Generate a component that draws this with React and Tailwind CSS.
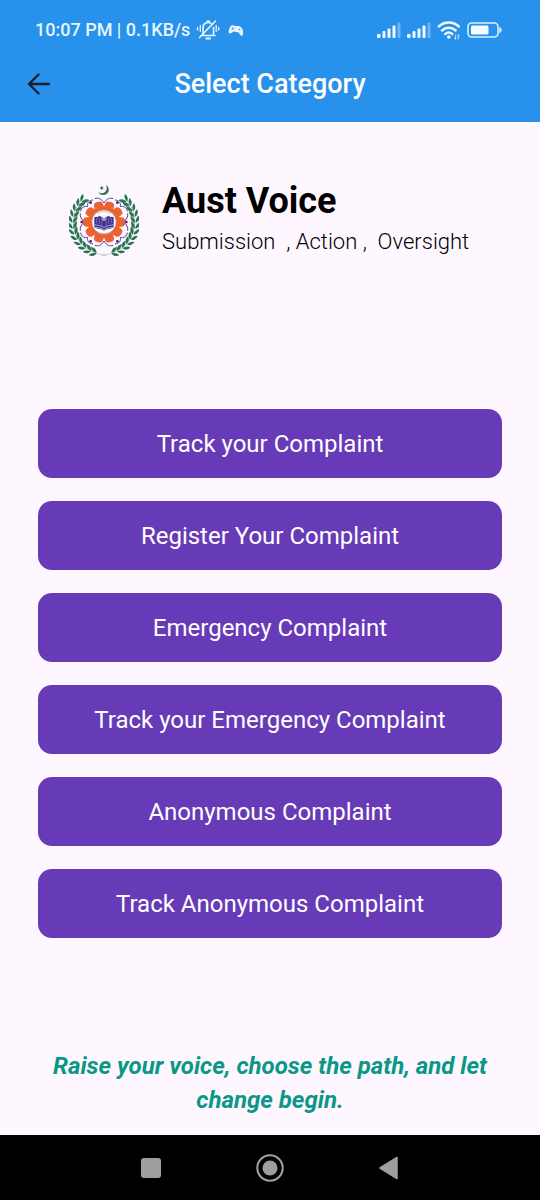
import React from "react";

const categories = [
  "Track your Complaint",
  "Register Your Complaint",
  "Emergency Complaint",
  "Track your Emergency Complaint",
  "Anonymous Complaint",
  "Track Anonymous Complaint",
];

function MutedBell() {
  return (
    <svg width="24" height="22" viewBox="0 0 24 22" fill="none" stroke="#e6f6ff" strokeWidth="1.6" strokeLinecap="round" aria-hidden="true">
      <path d="M5.500 16.500h13.500M7 16V9a5 5 0 0 1 8.500-4M17.500 8.500V16M11 2.200h2.500" />
      <path d="M3.500 18.500 19.500 2" />
      <path d="M10.500 19.500h3.500" strokeWidth="2.200" />
      <path d="M4.300 6.500v6M1.500 8.500v2.500M20.200 6.500v6M22.800 8.500v2.500" strokeWidth="1.300" />
    </svg>
  );
}

function Gamepad() {
  return (
    <svg width="16" height="13" viewBox="0 0 16 13" aria-hidden="true">
      <path fill="#e6f6ff" d="M3.500 1.500C5 .9 6.200 2 7.500 2.100c1.400.1 3-.3 4.500.3 2.700 1 3.500 5 3 8-.2 1.700-2.200 1.700-3 .3L10.800 8.500 5.500 7.600 3 9.200C1.700 10 .4 9.200.6 7.600c.3-2.500 1-5.300 2.900-6.100Z" />
      <path d="M3.300 4.700h3M4.800 3.200v3" stroke="#2891eb" strokeWidth=".7" />
      <circle cx="11.500" cy="5.500" r=".8" fill="#2891eb" />
    </svg>
  );
}

function Signal() {
  return (
    <svg width="24" height="17" viewBox="0 0 24 17" fill="#f0faff" aria-hidden="true">
      <rect x="0" y="12" width="3.500" height="4" rx="1.200" />
      <rect x="5.500" y="9" width="3" height="7" rx="1" />
      <rect x="10.500" y="6.500" width="3" height="9.500" rx="1" />
      <rect x="15.500" y="3.500" width="3" height="12.500" rx="1" />
      <rect x="20.500" y="0.500" width="3" height="15.500" rx="1" opacity=".35" />
    </svg>
  );
}

function Wifi() {
  return (
    <svg width="24" height="19" viewBox="0 0 24 19" fill="none" stroke="#f0faff" strokeWidth="2.500" strokeLinecap="round" aria-hidden="true">
      <path d="M1.800 5.500a14.500 14.500 0 0 1 20 0M5 9.500a10 10 0 0 1 13.600 0M8.300 13a5.500 5.500 0 0 1 7 0" />
      <circle cx="11.800" cy="16" r="1.800" fill="#f0faff" stroke="none" />
      <path d="M18.700 14v4M17.400 16.800l1.300 1.200M21.200 18v-4.500l1.200 1.200" strokeWidth="1" opacity=".8" />
    </svg>
  );
}

function Battery() {
  return (
    <svg width="36" height="16" viewBox="0 0 36 16" aria-hidden="true">
      <rect x="1" y="1" width="30" height="14" rx="3.800" fill="none" stroke="#d9f1ff" strokeWidth="1.600" />
      <rect x="4" y="3.500" width="17.500" height="9" rx="1.500" fill="#f5fbff" />
      <path d="M32.800 5.500c1.800.2 1.800 4.800 0 5Z" fill="#d9f1ff" stroke="#d9f1ff" />
    </svg>
  );
}

const leafAngles = [14, 25, 36, 47, 58, 69, 80, 91, 102, 113, 124, 134];

function LaurelBranch() {
  return (
    <g fill="#2b7553">
      <path d="M138 234C77 229 42 187 40 136c0-29 10-52 25-68" fill="none" stroke="#7aa58f" strokeWidth="1.500" />
      {leafAngles.map((angle) => (
        <g key={angle} transform={`rotate(${angle} 131 137)`}>
          <path d="M132 229c-10 1-17-4-21-13 12-1 19 4 21 13Z" />
          <path d="M132 231c-8-1-18 3-21 11 10 2 18-2 21-11Z" />
        </g>
      ))}
    </g>
  );
}

const lobes = [18, 54, 90, 126, 162, 198, 234, 270, 306, 342];

function Emblem() {
  return (
    <svg className="h-[75px] w-[70px] shrink-0" viewBox="27 20 210 225" role="img" aria-label="University emblem">
      <LaurelBranch />
      <g transform="translate(264 0) scale(-1 1)">
        <LaurelBranch />
      </g>
      <path d="M138 22c16 12 7 32-9 31-7 0-12-4-15-10 6 6 15 6 21 1s7-14 3-22Z" fill="#356f52" />
      <path d="m124 24 2 5 5-1-3 4 3 4-5-1-3 4v-5l-5-2 5-2Z" fill="#356f52" />
      <g fill="none" stroke="#4b3da0" strokeWidth="3">
        <path d="M105 64c9-4 19 0 27 13 8-13 18-17 27-13M99 68c-13 1-18 10-16 20-10-3-19 2-21 14M165 68c13 1 18 10 16 20 10-3 19 2 21 14" />
        <path d="M61 108c-2 10 4 18 11 26-7 8-13 16-11 26M203 108c2 10-4 18-11 26 7 8 13 16 11 26" />
        <path d="M105 204c9 4 19 0 27-13 8 13 18 17 27 13M99 200c-13-1-18-10-16-20-10 3-19-2-21-14M165 200c13-1 18-10 16-20 10 3 19-2 21-14" />
      </g>
      <g fill="#ee622d">
        {lobes.map((angle) => (
          <rect key={angle} x="118" y="71" width="28" height="34" rx="11" transform={`rotate(${angle} 132 134)`} />
        ))}
        <circle cx="132" cy="134" r="48" />
      </g>
      <g fill="#332889">
        <circle cx="92" cy="76" r="4" />
        <circle cx="172" cy="76" r="4" />
        <circle cx="65" cy="134" r="4" />
        <circle cx="199" cy="134" r="4" />
        <circle cx="92" cy="192" r="4" />
        <circle cx="172" cy="192" r="4" />
      </g>
      <circle cx="132" cy="134" r="37" fill="#fffaf8" stroke="#a65a68" strokeWidth="2" />
      <path d="M112 108c13-8 27-8 40 0M110 163c15 9 29 9 44 0" fill="none" stroke="#b5a0aa" strokeWidth="4" strokeDasharray="3 2" />
      <path d="M103 120c5-2 8-2 12 0v-5c8 1 14 5 17 10 3-5 9-9 17-10v5c4-2 7-2 12 0v30c-7 6-17 3-29 10-12-7-22-4-29-10Z" fill="#3f3094" />
      <path d="M104 142c11 3 20 2 28 9 8-7 17-6 28-9M104 149c11 3 20 2 28 9 8-7 17-6 28-9" fill="none" stroke="#dcd7ee" strokeWidth="2" />
      <path d="M110 121v17M118 121v19M126 125v20M138 125v20M146 121v19M154 121v17" stroke="#a9a0d0" strokeWidth="1.500" />
      <path d="m125 123 7 6 7-6" fill="none" stroke="#fffaf8" strokeWidth="3" />
    </svg>
  );
}

export default function App() {
  return (
    <div className="flex min-h-screen flex-col bg-[#fef7ff] font-['Roboto',sans-serif] text-black">
      <header className="bg-[#2891eb] pb-[14px] text-white">
        <div className="flex h-[60px] items-center justify-between pr-[37px] pl-[35px] text-[#e6f6ff]">
          <div className="flex items-center">
            <span className="text-[18px] leading-6 font-medium">10:07 PM | 0.1KB/s</span>
            <span className="ml-[6px]"><MutedBell /></span>
            <span className="ml-2"><Gamepad /></span>
          </div>
          <div className="flex items-center gap-[6px]">
            <Signal />
            <Signal />
            <Wifi />
            <Battery />
          </div>
        </div>
        <div className="grid h-12 grid-cols-[78px_1fr_78px] items-center">
          <button type="button" aria-label="Back" className="flex h-12 items-center pl-[27px]">
            <svg width="24" height="24" viewBox="0 0 24 24" fill="none" stroke="#17202c" strokeWidth="2.400" strokeLinecap="round" strokeLinejoin="round" aria-hidden="true">
              <path d="M22 12H2M11.500 2.500 2 12l9.500 9.500" />
            </svg>
          </button>
          <h1 className="text-center text-[27px] leading-8 font-medium">Select Category</h1>
        </div>
      </header>

      <main className="flex flex-1 flex-col px-[38px]">
        <section className="flex items-center gap-[23px] pt-[58px] pl-[31px]">
          <Emblem />
          <div>
            <h2 className="text-[36px] leading-[42px] font-bold">Aust Voice</h2>
            <p className="text-[22px] leading-10 font-light whitespace-pre">Submission  , Action ,  Oversight</p>
          </div>
        </section>

        <div className="mt-[147px] flex flex-col gap-[23px]">
          {categories.map((name) => (
            <button key={name} type="button" className="h-[69px] rounded-[14px] bg-[#673ab7] text-[24px] leading-8 text-white">
              {name}
            </button>
          ))}
        </div>

        <p className="mt-auto pb-[18px] text-center text-[24px] leading-[34px] font-bold text-[#0b9786] italic">
          Raise your voice, choose the path, and let change begin.
        </p>
      </main>

      <nav aria-label="System navigation" className="flex h-[65px] items-center justify-center gap-[94px] bg-black">
        <button type="button" aria-label="Recent apps">
          <svg width="22" height="22" viewBox="0 0 22 22" aria-hidden="true"><rect x="1" y="1" width="20" height="20" rx="3" fill="#9e9e9e" /></svg>
        </button>
        <button type="button" aria-label="Home">
          <svg width="28" height="28" viewBox="0 0 28 28" aria-hidden="true">
            <circle cx="14" cy="14" r="12.700" fill="none" stroke="#a3a3a3" strokeWidth="2" />
            <circle cx="14" cy="14" r="7.500" fill="#9e9e9e" />
          </svg>
        </button>
        <button type="button" aria-label="Back to previous screen">
          <svg width="22" height="24" viewBox="0 0 22 24" aria-hidden="true"><path d="M19 1.500v21L2 12Z" fill="#9e9e9e" stroke="#9e9e9e" strokeWidth="1.500" strokeLinejoin="round" /></svg>
        </button>
      </nav>
    </div>
  );
}
